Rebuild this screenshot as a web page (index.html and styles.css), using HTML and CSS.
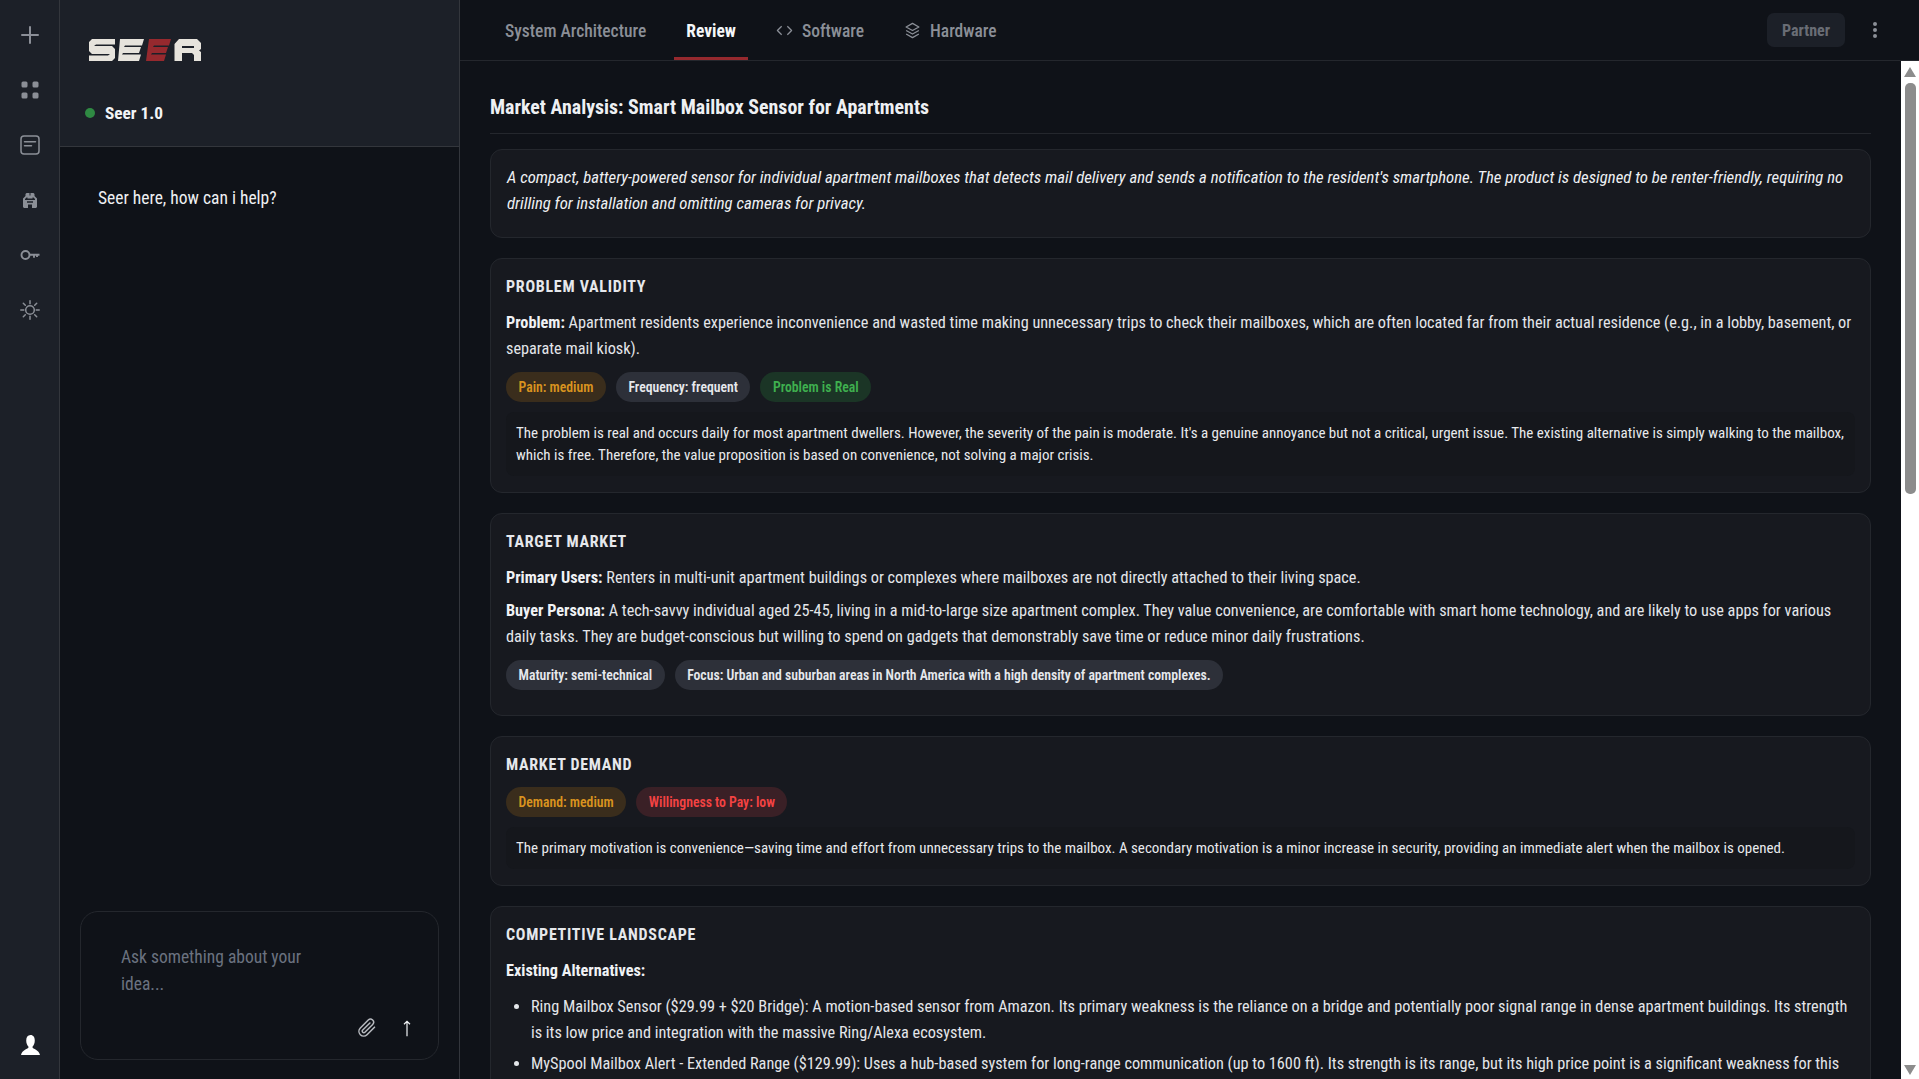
FILE: index.html
```html
<!DOCTYPE html>
<html lang="en">
<head>
<meta charset="utf-8">
<title>Seer</title>
<link rel="stylesheet" href="styles.css">
</head>
<body>
<div class="app">
  <nav class="rail">
    <div class="rail-top">
      <svg class="rail-icon" viewBox="0 0 20 20"><path class="st2" d="M10 2v16M2 10h16"/></svg>
      <svg class="rail-icon" viewBox="0 0 20 20"><rect class="fl" x="1.500" y="1.500" width="6" height="6" rx="1.500"/><rect class="fl" x="12.500" y="1.500" width="6" height="6" rx="1.500"/><rect class="fl" x="1.500" y="12.500" width="6" height="6" rx="1.500"/><rect class="fl" x="12.500" y="12.500" width="6" height="6" rx="1.500"/></svg>
      <svg class="rail-icon" viewBox="0 0 20 20"><rect class="st15" x="1" y="1" width="18" height="18" rx="3"/><path class="st15" d="M4.500 6.800h11M4.500 10.800h7"/></svg>
      <svg class="rail-icon" viewBox="0 0 20 20"><path class="fl" fill-rule="evenodd" d="M6.500 3h3v2.500h1V3h3l1 1v2l2.500 2.500V17l-1 1H12v-3.500H8V18H4l-1-1V8.500L5.500 6V4zM6.500 7.500L5 9v1h10V9l-1.500-1.500h-1v1h-5v-1zM7 11.300h6v1.500H7z"/></svg>
      <svg class="rail-icon" viewBox="0 0 20 20"><circle class="st-key" cx="5.500" cy="10" r="4"/><path class="st-key" d="M9.500 9.700h10M14 10v2.800M17 10v2"/></svg>
      <svg class="rail-icon" viewBox="0 0 20 20"><circle class="st15" cx="10" cy="10" r="4.300"/><path class="st15" d="M10 .8v3M10 16.200v3M.8 10h3M16.200 10h3M3.300 3.300l2 2M14.700 14.700l2 2M3.300 16.700l2-2M14.700 5.300l2-2"/></svg>
    </div>
    <svg class="rail-user" viewBox="2 2.500 20 18" preserveAspectRatio="none"><path class="user" d="M12 2.500c3 0 4.500 2 4.500 5 0 2.500-1 4.300-2.300 5.300v1.200c0 .8 6.800 1.800 7.800 6.500H2c1-4.700 7.800-5.700 7.800-6.500v-1.200C8.500 11.800 7.500 10 7.500 7.500c0-3 1.500-5 4.500-5z"/></svg>
  </nav>

  <aside class="chat">
    <header class="chat-head">
      <svg class="logo" viewBox="0 0 112 22">
        <path class="logo-w" d="M3 0H26V5.500H7L5 7H23L26 10V19L23 22H0V16.500H19L21 15H3L0 12V3z"/>
        <path class="logo-w" d="M31 0H55L53 6.500H36L35 8H52L50 14H34L33 15.500H52L50 22H29z"/>
        <path class="logo-r" d="M60 0H82L80 6.500H65L64 8H79L77 14H63L62 15.500H77L75 22H57z"/>
        <path class="logo-w" fill-rule="evenodd" d="M90 0H108L112 4V10L110 11.500L112 13V22H105V16L103 14H93V22H85.500V5zM93 7H105V9H93z"/>
      </svg>
      <div class="status"><span class="dot"></span><span class="status-name">Seer 1.0</span></div>
    </header>
    <div class="messages"><p class="msg">Seer here, how can i help?</p></div>
    <div class="composer">
      <p class="placeholder">Ask something about your idea...</p>
      <div class="composer-actions">
        <svg class="clip" viewBox="0 0 24 24"><path class="st-clip" d="M21 11l-9 9a5.500 5.500 0 0 1-8-8l9.500-9.500a3.700 3.700 0 0 1 5.300 5.200L9.500 17a1.800 1.800 0 0 1-2.600-2.600L15.500 6"/></svg>
        <svg class="send" viewBox="0 0 16 24"><path class="st-send" d="M8 23V3M4 7l4-4 4 4"/></svg>
      </div>
    </div>
  </aside>

  <main class="main">
    <header class="tabs">
      <div class="tab-list">
        <a class="tab">System Architecture</a>
        <a class="tab active">Review</a>
        <a class="tab"><svg class="tab-icon" viewBox="0 0 24 24"><path class="st-tab" d="M8 6l-6 6 6 6M16 6l6 6-6 6"/></svg>Software</a>
        <a class="tab"><svg class="tab-icon" viewBox="0 0 24 24"><path class="st-tab" d="M12 2L3 7l9 5 9-5zM3 12l9 5 9-5M3 17l9 5 9-5"/></svg>Hardware</a>
      </div>
      <div class="tab-tools">
        <span class="partner">Partner</span>
        <svg class="kebab" viewBox="0 0 6 16"><circle class="kdot" cx="3" cy="2" r="2"/><circle class="kdot" cx="3" cy="8" r="2"/><circle class="kdot" cx="3" cy="14" r="2"/></svg>
      </div>
    </header>
    <div class="body">
      <div class="content">
        <h1 class="title">Market Analysis: Smart Mailbox Sensor for Apartments</h1>
        <section class="card summary">A compact, battery-powered sensor for individual apartment mailboxes that detects mail delivery and sends a notification to the resident's smartphone. The product is designed to be renter-friendly, requiring no drilling for installation and omitting cameras for privacy.</section>

        <section class="card">
          <h2 class="card-title">PROBLEM VALIDITY</h2>
          <p class="para"><b>Problem:</b> Apartment residents experience inconvenience and wasted time making unnecessary trips to check their mailboxes, which are often located far from their actual residence (e.g., in a lobby, basement, or separate mail kiosk).</p>
          <div class="tags"><span class="tag amber">Pain: medium</span><span class="tag grey">Frequency: frequent</span><span class="tag green">Problem is Real</span></div>
          <div class="note">The problem is real and occurs daily for most apartment dwellers. However, the severity of the pain is moderate. It's a genuine annoyance but not a critical, urgent issue. The existing alternative is simply walking to the mailbox, which is free. Therefore, the value proposition is based on convenience, not solving a major crisis.</div>
        </section>

        <section class="card">
          <h2 class="card-title">TARGET MARKET</h2>
          <p class="para"><b>Primary Users:</b> Renters in multi-unit apartment buildings or complexes where mailboxes are not directly attached to their living space.</p>
          <p class="para"><b>Buyer Persona:</b> A tech-savvy individual aged 25-45, living in a mid-to-large size apartment complex. They value convenience, are comfortable with smart home technology, and are likely to use apps for various daily tasks. They are budget-conscious but willing to spend on gadgets that demonstrably save time or reduce minor daily frustrations.</p>
          <div class="tags"><span class="tag grey">Maturity: semi-technical</span><span class="tag grey">Focus: Urban and suburban areas in North America with a high density of apartment complexes.</span></div>
        </section>

        <section class="card">
          <h2 class="card-title">MARKET DEMAND</h2>
          <div class="tags"><span class="tag amber">Demand: medium</span><span class="tag red">Willingness to Pay: low</span></div>
          <div class="note">The primary motivation is convenience—saving time and effort from unnecessary trips to the mailbox. A secondary motivation is a minor increase in security, providing an immediate alert when the mailbox is opened.</div>
        </section>

        <section class="card">
          <h2 class="card-title">COMPETITIVE LANDSCAPE</h2>
          <p class="para"><b>Existing Alternatives:</b></p>
          <ul class="list">
            <li>Ring Mailbox Sensor ($29.99 + $20 Bridge): A motion-based sensor from Amazon. Its primary weakness is the reliance on a bridge and potentially poor signal range in dense apartment buildings. Its strength is its low price and integration with the massive Ring/Alexa ecosystem.</li>
            <li>MySpool Mailbox Alert - Extended Range ($129.99): Uses a hub-based system for long-range communication (up to 1600 ft). Its strength is its range, but its high price point is a significant weakness for this market segment.</li>
          </ul>
        </section>
      </div>
      <div class="scrollbar">
        <span class="arrow up"></span>
        <div class="track"><div class="thumb"></div></div>
        <span class="arrow down"></span>
      </div>
    </div>
  </main>
</div>
</body>
</html>
```
FILE: styles.css
```css
* { box-sizing: border-box; }
html, body { margin: 0; height: 100%; overflow: hidden; background: #0f1218; }
body { font-family: "Roboto Condensed", Roboto, "Liberation Sans", sans-serif; font-stretch: 75%; color: #e8eaed; }
.app { display: flex; height: 1079px; width: 1919px; }

.rail { width: 60px; flex: none; background: #1c2028; border-right: 1px solid #33363c; display: flex; flex-direction: column; justify-content: space-between; align-items: center; padding: 25px 0 24px 1px; }
.rail-top { display: flex; flex-direction: column; gap: 35px; }
.rail-icon { width: 20px; height: 20px; display: block; }
.rail-user { width: 19px; height: 20px; }
.user { fill: #fff; }
.fl { fill: #8b8f97; }
.st2, .st15, .st-key { fill: none; stroke: #8b8f97; }
.st2 { stroke-width: 2; stroke-linecap: round; }
.st15 { stroke-width: 1.500; stroke-linecap: round; }
.st-key { stroke-width: 1.900; }

.chat { width: 400px; flex: none; background: #0f1218; border-right: 1px solid #33363c; display: flex; flex-direction: column; }
.chat-head { height: 147px; background: #1c2028; border-bottom: 1px solid #33363c; padding: 39px 0 0 29px; }
.logo { width: 112px; height: 22px; display: block; }
.logo-w { fill: #e6e3dc; }
.logo-r { fill: #96292e; }
.status { display: flex; align-items: center; gap: 10px; margin: 42px 0 0 -4px; }
.dot { width: 10px; height: 10px; border-radius: 50%; background: #2f8a43; }
.status-name { font-size: 17.300px; font-weight: 700; color: #f2f4f7; }
.messages { flex: 1; padding: 39px 38px; }
.msg { margin: 0; font-size: 17.500px; line-height: 24px; color: #eef0f3; }
.composer { margin: 0 20px 19px; height: 149px; border: 1px solid #24272d; border-radius: 18px; padding: 32px 40px 0; display: flex; flex-direction: column; justify-content: space-between; }
.placeholder { margin: 0; width: 200px; font-size: 17.500px; line-height: 27px; color: #6b7280; }
.composer-actions { display: flex; justify-content: flex-end; align-items: center; gap: 23.500px; margin: 0 -14.500px 21px 0; }
.clip { width: 20px; height: 20px; }
.st-clip { fill: none; stroke: #b8bbc0; stroke-width: 1.800; stroke-linecap: round; }
.send { width: 12px; height: 18px; }
.st-send { fill: none; stroke: #f0f2f5; stroke-width: 1.600; }

.main { flex: 1; min-width: 0; display: flex; flex-direction: column; }
.tabs { height: 61px; flex: none; display: flex; justify-content: space-between; border-bottom: 1px solid #24272d; padding: 0 41px 0 33px; }
.tab-list { display: flex; gap: 16px; }
.tab { display: flex; align-items: center; gap: 9px; padding: 1px 12px 0; font-size: 17.500px; color: #8b8f97; font-weight: 500; height: 60px; }
.tab.active { color: #f5f7fa; font-weight: 700; border-bottom: 3px solid #96292e; padding-top: 4px; }
.tab-icon { width: 17px; height: 17px; }
.st-tab { fill: none; stroke: #8b8f97; stroke-width: 1.800; stroke-linejoin: round; }
.tab-tools { display: flex; align-items: center; gap: 27px; }
.partner { height: 34px; width: 78px; justify-content: center; display: flex; align-items: center; background: #1c2028; border-radius: 7px; font-size: 16px; font-weight: 700; color: #696d75; }
.kebab { width: 6px; height: 16px; }
.kdot { fill: #8b8f97; }

.body { flex: 1; min-height: 0; display: flex; }
.content { flex: 1; min-width: 0; padding: 30px 30px 0; overflow: hidden; }
.title { margin: 0 0 15px; height: 43px; font-size: 19.900px; font-weight: 700; line-height: 33px; border-bottom: 1px solid #24272d; color: #eef0f3; }
.card { background: #17191f; border: 1px solid #24272d; border-radius: 12px; padding: 16px 15px; margin-bottom: 20px; }
.summary { font-style: italic; font-size: 16.740px; line-height: 26px; color: #eef0f3; padding: 14px 16px 16px; height: 89px; }
.card-title { margin: 0 0 11px; font-size: 16px; letter-spacing: .72px; line-height: 24px; font-weight: 700; color: #e6e8ec; }
.card-title + .tags { margin-top: -1px; }
.para { margin: 0 0 7px; font-size: 16.250px; line-height: 26px; color: #e4e6ea; }
.para b { font-weight: 700; color: #f0f2f5; }
.para + .tags { margin-top: 10px; }
.tags { display: flex; gap: 10px; margin-bottom: 9.500px; }
.tag { height: 30px; padding: 0 12.500px; border-radius: 15px; display: flex; align-items: center; font-size: 13.720px; font-weight: 600; }
.amber { background: #3a2d1c; color: #d9931f; }
.grey { background: #2d3039; color: #e6e8ec; }
.green { background: #1b3526; color: #3fb04f; }
.red { background: #3a2026; color: #f44343; }
.note { background: #15171c; border-radius: 8px; padding: 10px; font-size: 15px; line-height: 22px; color: #e8eaed; }
.list { margin: 10px 0 0; padding: 0 0 0 25px; font-size: 16.250px; line-height: 26px; color: #e4e6ea; }
.list li { margin-bottom: 5px; }

.scrollbar { width: 18px; flex: none; background: #fff; display: flex; flex-direction: column; align-items: center; padding: 6px 0 0; }
.arrow { flex: none; width: 0; height: 0; border-left: 6.500px solid transparent; border-right: 6.500px solid transparent; }
.up { border-bottom: 10px solid #8c8c8c; }
.down { border-top: 10px solid #8c8c8c; margin-bottom: 4px; }
.track { flex: 1; width: 100%; padding: 6px 3px 0 4px; }
.thumb { height: 411px; background: #8c8c8c; border-radius: 5px; }
```
